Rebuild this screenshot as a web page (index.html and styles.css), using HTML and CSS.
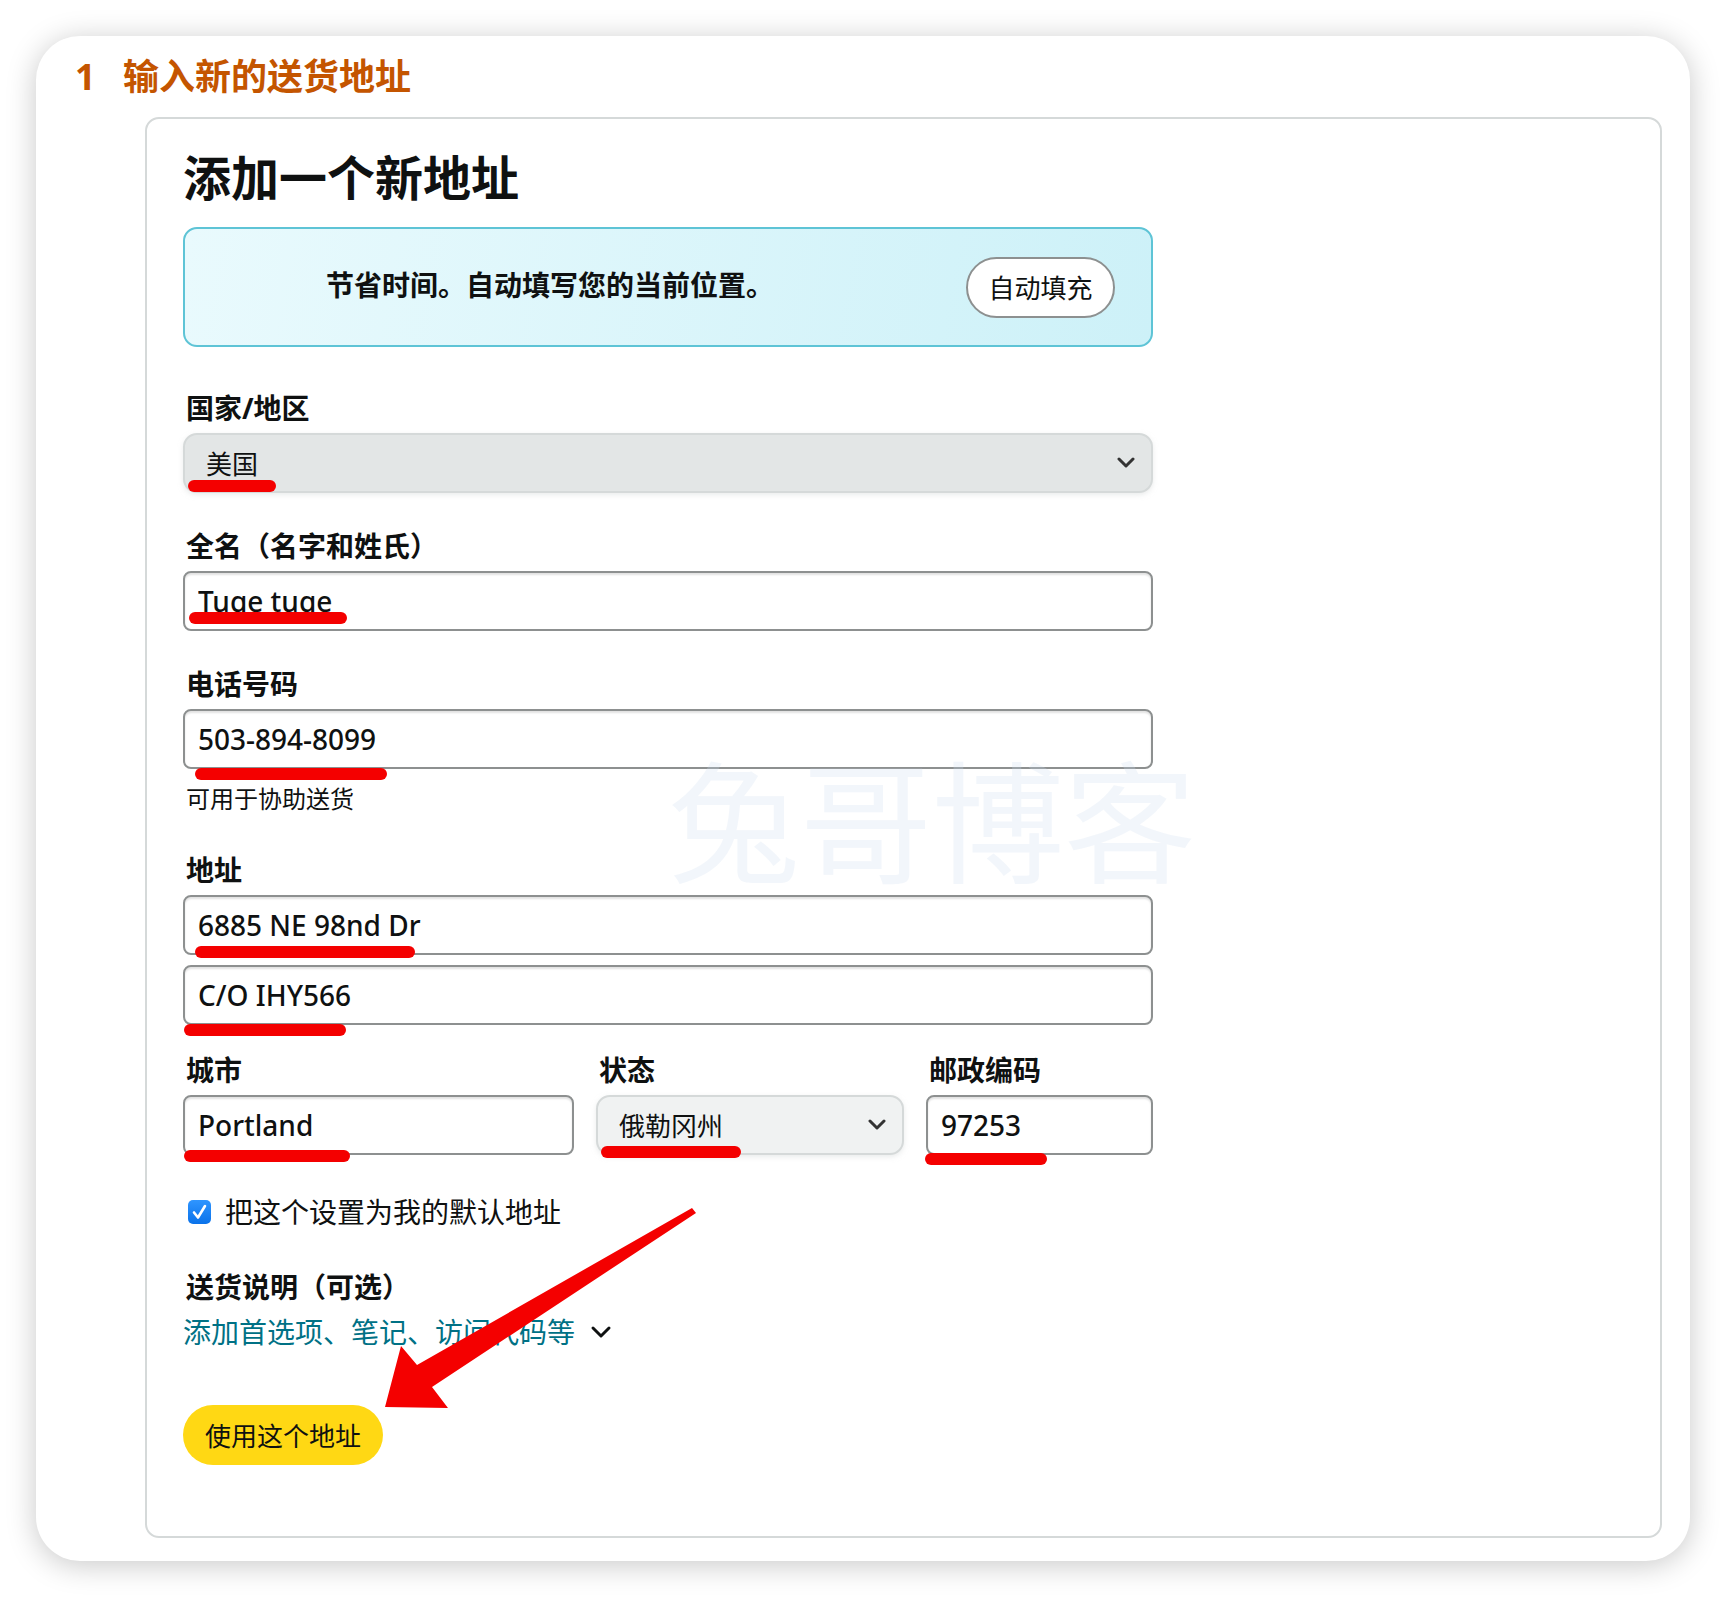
FILE: index.html
```html
<!DOCTYPE html>
<html lang="zh-CN">
<head>
    <meta charset="UTF-8">
    <meta name="viewport" content="width=device-width, initial-scale=1.0">
    <title>输入新的送货地址</title>
    <link rel="stylesheet" href="styles.css">
</head>
<body>

<div class="page">
    <div class="frame">
        <h1 class="step"><span class="step-num">1</span>输入新的送货地址</h1>

        <div class="panel">
            <h2 class="panel-title">添加一个新地址</h2>

            <div class="autofill">
                <p>节省时间。自动填写您的当前位置。</p>
                <button type="button" class="btn-outline">自动填充</button>
            </div>

            <div class="form">
                <div class="field field-country">
                    <label class="field-label">国家/地区</label>
                    <div class="box">
                        <div class="select select-dark">
                            <span>美国</span>
                            <svg class="chev" width="18" height="12" viewBox="0 0 18 12"><polyline points="2,2 9,9 16,2" fill="none" stroke="#333" stroke-width="3" stroke-linecap="round" stroke-linejoin="round"/></svg>
                        </div>
                        <span class="mark mark-country"></span>
                    </div>
                </div>

                <div class="field">
                    <label class="field-label">全名（名字和姓氏）</label>
                    <div class="box">
                        <input type="text" class="input" value="Tuge tuge">
                        <span class="mark mark-name"></span>
                    </div>
                </div>

                <div class="field">
                    <label class="field-label">电话号码</label>
                    <div class="box">
                        <input type="text" class="input" value="503-894-8099">
                        <span class="mark mark-phone"></span>
                    </div>
                    <p class="hint">可用于协助送货</p>
                </div>

                <div class="field field-address">
                    <label class="field-label">地址</label>
                    <div class="box">
                        <input type="text" class="input" value="6885 NE 98nd Dr">
                        <span class="mark mark-addr1"></span>
                    </div>
                    <div class="box box-second">
                        <input type="text" class="input" value="C/O IHY566">
                        <span class="mark mark-addr2"></span>
                    </div>
                </div>

                <div class="row">
                    <div>
                        <label class="field-label">城市</label>
                        <div class="box">
                            <input type="text" class="input" value="Portland">
                            <span class="mark mark-city"></span>
                        </div>
                    </div>
                    <div>
                        <label class="field-label">状态</label>
                        <div class="box">
                            <div class="select select-light">
                                <span>俄勒冈州</span>
                                <svg class="chev" width="18" height="12" viewBox="0 0 18 12"><polyline points="2,2 9,9 16,2" fill="none" stroke="#333" stroke-width="3" stroke-linecap="round" stroke-linejoin="round"/></svg>
                            </div>
                            <span class="mark mark-state"></span>
                        </div>
                    </div>
                    <div>
                        <label class="field-label">邮政编码</label>
                        <div class="box">
                            <input type="text" class="input" value="97253">
                            <span class="mark mark-zip"></span>
                        </div>
                    </div>
                </div>

                <div class="check-row">
                    <span class="checkbox">
                        <svg width="23" height="24" viewBox="0 0 23 24"><polyline points="6,12.5 10,17.5 17,6" fill="none" stroke="#fff" stroke-width="2.6" stroke-linecap="round" stroke-linejoin="round"/></svg>
                    </span>
                    <span>把这个设置为我的默认地址</span>
                </div>

                <div class="field field-notes">
                    <label class="field-label">送货说明（可选）</label>
                    <a class="expander">添加首选项、笔记、访问代码等
                        <svg width="22" height="14" viewBox="0 0 22 14"><polyline points="3,3 11,11 19,3" fill="none" stroke="#0f1111" stroke-width="3" stroke-linecap="round" stroke-linejoin="round"/></svg>
                    </a>
                </div>

                <button type="button" class="btn-primary">使用这个地址</button>
            </div>
        </div>
    </div>

    <div class="watermark">兔哥博客</div>

    <!-- annotation arrow -->
    <svg class="arrow" width="1726" height="1598" viewBox="0 0 1726 1598">
        <polygon points="385,1407 401,1346 417,1365 692,1208 696,1213 432,1387 448,1408" fill="#f40000"/>
    </svg>
</div>

</body>
</html>
```

FILE: styles.css
```css
/* Base */
* {
    box-sizing: border-box;
}

body {
    margin: 0;
    background: #fff;
    font-family: "Noto Sans", "Noto Sans CJK SC", sans-serif;
    color: #0f1111;
}

.page {
    position: relative;
    width: 1726px;
    height: 1598px;
    padding: 36px;
}

/* Outer card */
.frame {
    height: 1525px;
    background: #fff;
    border-radius: 44px;
    box-shadow: 0 4px 30px rgba(0, 0, 0, 0.22);
    padding: 19px 28px 23px 39px;
    display: flex;
    flex-direction: column;
}

.step {
    margin: 0;
    display: flex;
    font-size: 36px;
    line-height: 44px;
    font-weight: 700;
    color: #c45500;
}

.step-num {
    width: 48px;
}

/* Inner panel */
.panel {
    flex: 1;
    margin: 18px 0 0 70px;
    border: 2px solid #d5d9d9;
    border-radius: 14px;
    padding: 30px 36px;
}

.panel-title {
    margin: 0;
    font-size: 48px;
    line-height: 58px;
    font-weight: 700;
}

/* Autofill banner */
.autofill {
    width: 970px;
    height: 120px;
    margin-top: 20px;
    border: 2px solid #5ec4d6;
    border-radius: 14px;
    background: linear-gradient(100deg, #e9fafd, #cdf1f8);
    display: flex;
    align-items: center;
    justify-content: space-between;
    padding: 0 36px 0 141px;
}

.autofill p {
    margin: 0 0 6px;
    font-size: 28px;
    font-weight: 700;
}

.btn-outline {
    width: 149px;
    height: 61px;
    border: 2px solid #8d9090;
    border-radius: 31px;
    background: #fff;
    font-family: inherit;
    font-size: 26px;
    color: #0f1111;
    padding: 0;
}

/* Form */
.form {
    width: 970px;
}

.field {
    margin-top: 35px;
}

.field-country {
    margin-top: 43px;
}

.field-address {
    margin-top: 38px;
}

.field-label {
    display: block;
    font-size: 28px;
    line-height: 36px;
    font-weight: 700;
    margin-bottom: 7px;
    padding-left: 3px;
}

.box {
    position: relative;
}

.box-second {
    margin-top: 10px;
}

.input {
    display: block;
    width: 100%;
    height: 60px;
    border: 2px solid #8d9090;
    border-radius: 8px;
    box-shadow: inset 0 2px 2px rgba(15, 17, 17, 0.12);
    padding: 0 13px;
    font-family: "Noto Sans", "Noto Sans CJK SC", sans-serif;
    font-size: 28px;
    font-weight: 500;
    color: #0f1111;
    background: #fff;
    outline: none;
}

.select {
    height: 60px;
    border: 2px solid #d5d9d9;
    border-radius: 14px;
    box-shadow: 0 2px 5px rgba(213, 217, 217, 0.5);
    display: flex;
    align-items: center;
    justify-content: space-between;
    padding: 0 16px 0 21px;
    font-size: 26px;
}

.select-dark {
    background: #e3e6e6;
}

.select-light {
    background: #f0f2f2;
}

.hint {
    margin: 15px 0 0 3px;
    font-size: 24px;
    line-height: 30px;
}

.row {
    margin-top: 27px;
    display: grid;
    grid-template-columns: 391px 308px 1fr;
    column-gap: 22px;
}

/* Checkbox */
.check-row {
    margin: 39px 0 0 5px;
    display: flex;
    align-items: center;
    gap: 14px;
    font-size: 28px;
    line-height: 36px;
}

.checkbox {
    width: 23px;
    height: 24px;
    border-radius: 5px;
    background: linear-gradient(#2f95ff, #0a72ea);
    display: flex;
}

.field-notes {
    margin-top: 39px;
}

.expander {
    display: flex;
    align-items: center;
    gap: 15px;
    font-size: 28px;
    line-height: 40px;
    color: #007185;
}

/* Yellow button */
.btn-primary {
    display: block;
    margin-top: 53px;
    width: 200px;
    height: 60px;
    border: none;
    border-radius: 30px;
    background: #ffd814;
    font-family: inherit;
    font-size: 26px;
    color: #0f1111;
    padding: 0;
}

/* Red underline marks */
.mark {
    position: absolute;
    height: 12px;
    border-radius: 6px;
    background: #f40000;
}

.mark-country { left: 5px; bottom: 1px; width: 88px; }
.mark-name { left: 6px; bottom: 7px; width: 158px; }
.mark-phone { left: 12px; bottom: -11px; width: 192px; }
.mark-addr1 { left: 12px; bottom: -3px; width: 220px; }
.mark-addr2 { left: 1px; bottom: -11px; width: 162px; }
.mark-city { left: 1px; bottom: -7px; width: 166px; }
.mark-state { left: 5px; bottom: -3px; width: 140px; }
.mark-zip { left: -1px; bottom: -10px; width: 122px; }

/* Overlays */
.watermark {
    position: absolute;
    left: 668px;
    top: 750px;
    font-family: "Noto Sans CJK SC", sans-serif;
    font-size: 132px;
    line-height: 132px;
    color: rgba(205, 218, 240, 0.25);
    pointer-events: none;
}

.arrow {
    position: absolute;
    left: 0;
    top: 0;
    pointer-events: none;
}
```
